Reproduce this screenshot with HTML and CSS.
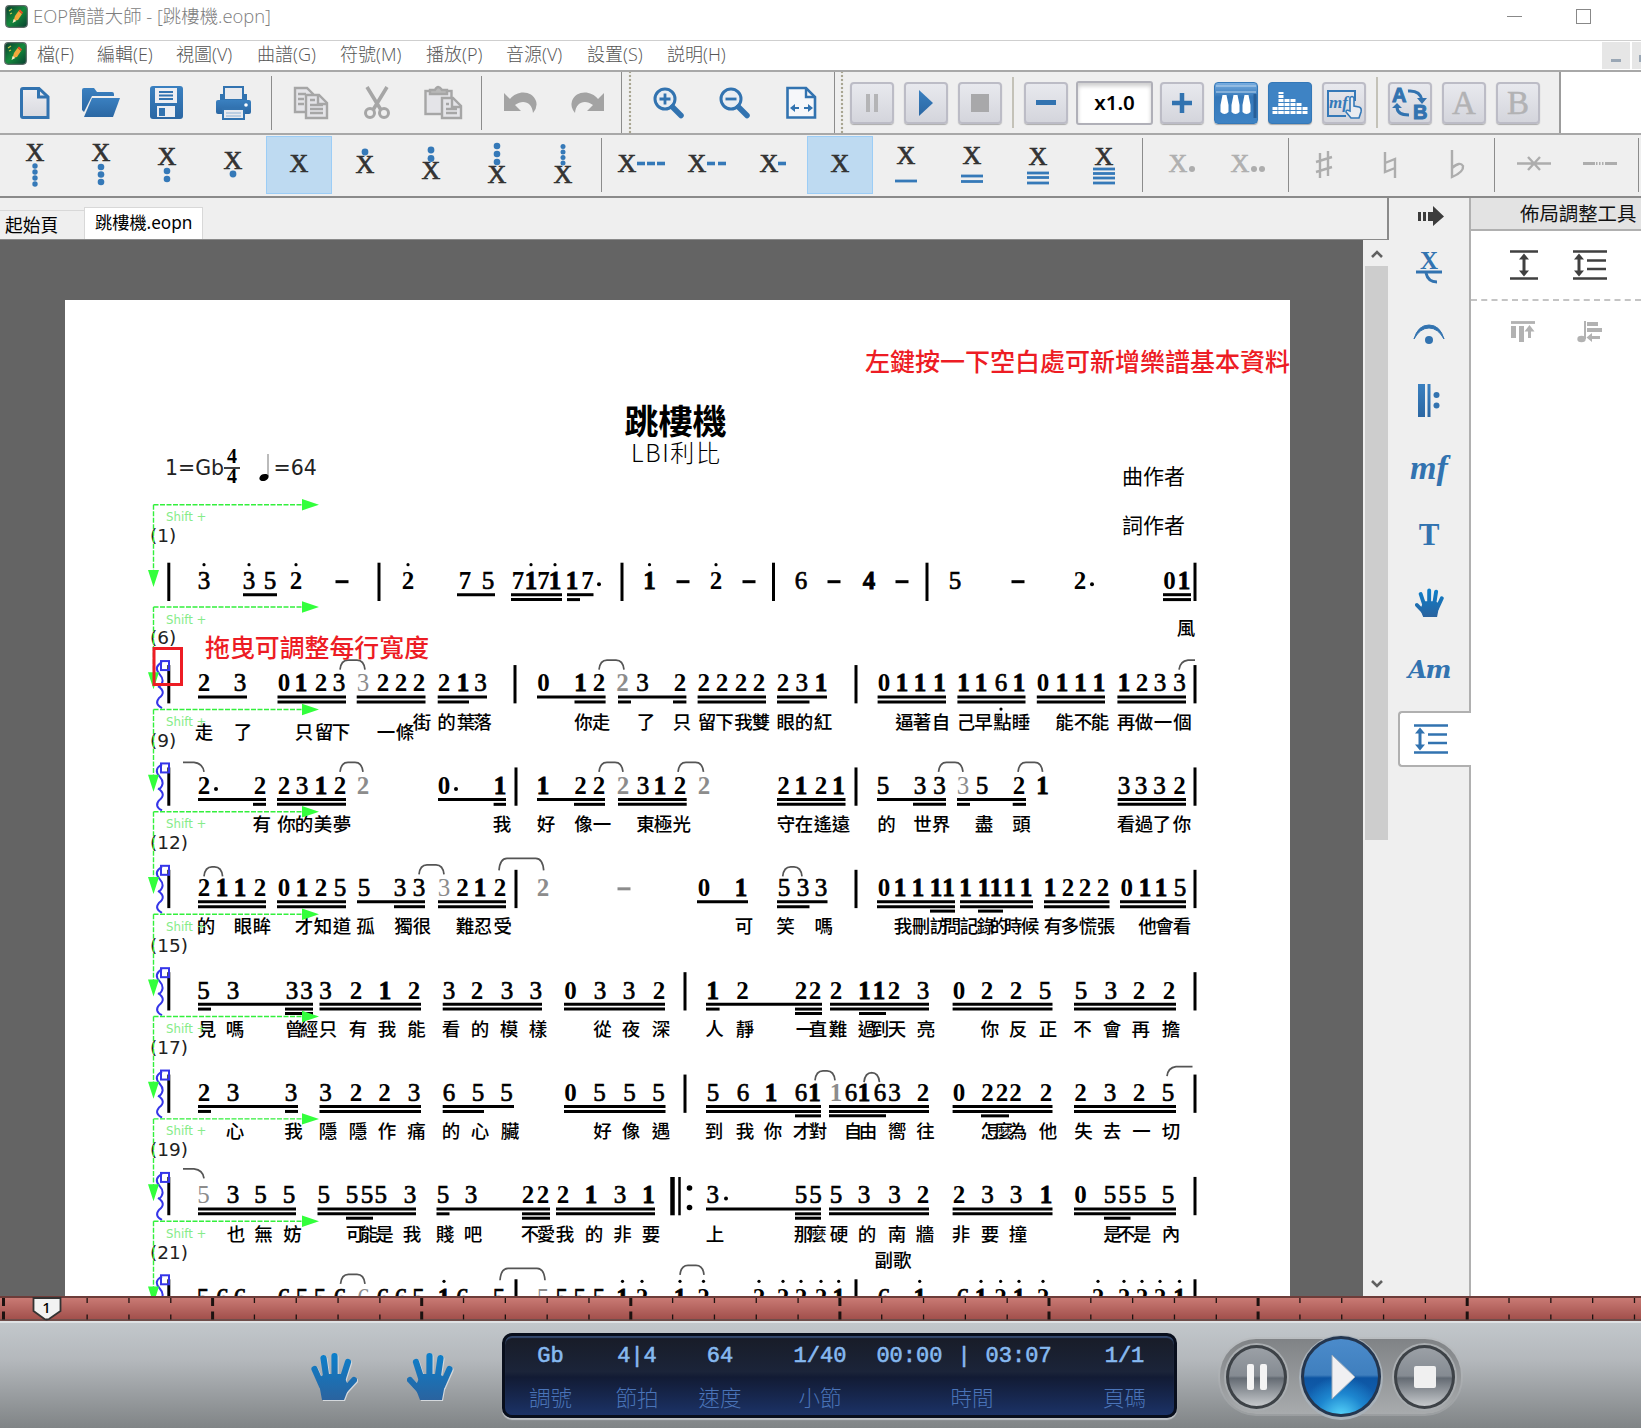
FILE: index.html
```html
<!DOCTYPE html>
<html lang="zh-Hant">
<head>
<meta charset="utf-8">
<title>EOP簡譜大師</title>
<link rel="stylesheet" href="styles.css">
</head>
<body>
<svg class="defs" width="0" height="0">
  <defs>
    <linearGradient id="blue" x1="0" y1="0" x2="0" y2="1"><stop offset="0" stop-color="#3a80c0"/><stop offset="1" stop-color="#2b67a3"/></linearGradient>
    <linearGradient id="handblue" x1="0" y1="0" x2="0" y2="48" gradientUnits="userSpaceOnUse"><stop offset="0" stop-color="#0b80cc"/><stop offset="1" stop-color="#2a639f"/></linearGradient>
    <linearGradient id="paper" x1="0" y1="0" x2="0" y2="1"><stop offset="0" stop-color="#eeeef2"/><stop offset="1" stop-color="#d8d9df"/></linearGradient>
    <linearGradient id="green" x1="0" y1="0" x2="1" y2="1"><stop offset="0" stop-color="#0a3a2c"/><stop offset=".5" stop-color="#148a3c"/><stop offset="1" stop-color="#083f30"/></linearGradient>
    <symbol id="logo" viewBox="0 0 23 23"><rect x=".7" y=".7" width="21.6" height="21.6" rx="3.5" fill="url(#green)" stroke="#5a6a66" stroke-width="1.2"/><path d="M8.500 16L10 11 13.500 6 17 9 13 15z" fill="#f3a93c"/><path d="M13.500 6l1.500-1.500 3 3-1 1.500z" fill="#f04a24"/><path d="M7.500 18l1.200-4 2.600 2z" fill="#fff0c8"/><path d="M4 6l3-2M5 9l2-1" stroke="#c8c84a" stroke-width="1.200"/></symbol>
    <symbol id="hand" viewBox="0 0 46 48" preserveAspectRatio="none"><g stroke="url(#handblue)" stroke-width="6.200" stroke-linecap="round" fill="none"><path d="M3.500 17L11 34M12.500 6L16 30M23.500 4L23.600 30M37 10L30 32M43 28L32 40"/></g><path d="M7 26L14 22H32L36.500 32 38 35 33 48H11z" fill="url(#handblue)"/></symbol>
    <symbol id="spacing" viewBox="0 0 34 30"><path d="M0 1.500H34M14 10.500H33M14 19H33M0 28.500H34" stroke="currentColor" stroke-width="2.600"/><path d="M6 7V23" stroke="currentColor" stroke-width="3"/><path d="M6 3.500l5 6H1zM6 26.500l5-6H1z" fill="currentColor"/></symbol>
  </defs>
</svg>

<header class="titlebar">
  <svg class="logo"><use href="#logo"/></svg>
  <span class="title">EOP簡譜大師 - [跳樓機.eopn]</span>
  <span class="win-min"></span><span class="win-max"></span>
</header>

<nav class="menubar">
  <svg class="logo"><use href="#logo"/></svg>
  <span class="mi w60">檔(F)</span><span class="mi w79">編輯(E)</span><span class="mi w81">視圖(V)</span><span class="mi w83">曲譜(G)</span><span class="mi w86">符號(M)</span><span class="mi w80">播放(P)</span><span class="mi w81">音源(V)</span><span class="mi w80">設置(S)</span><span class="mi">説明(H)</span>
  <span class="mdi"><i></i></span><span class="mdi last"><i></i></span>
</nav>

<div class="toolbar main">
  <div class="cell"><svg width="30" height="34"><path d="M3 2.500H19L28 11V31.500H3Q1.500 31.500 1.500 30V4Q1.500 2.500 3 2.500z" fill="url(#paper)" stroke="#3273b0" stroke-width="3"/><path d="M18.500 2V11H28" fill="none" stroke="#3273b0" stroke-width="3"/></svg></div>
  <div class="cell"><svg width="38" height="34"><path d="M0 4Q0 2 2 2H12L15 6H30Q32 6 32 8V10H10L2 26 0 24z" fill="url(#blue)"/><path d="M10 12H38L31 31H2z" fill="url(#blue)"/></svg></div>
  <div class="cell"><svg width="34" height="34"><rect x="0" y="0" width="33" height="33" rx="3" fill="url(#blue)"/><rect x="5" y="2" width="22" height="15" fill="#edeef2"/><path d="M9 6H23M9 9.500H23M9 13H23" stroke="#3273b0" stroke-width="1.800"/><rect x="7" y="20" width="18" height="11" fill="#edeef2"/><rect x="9" y="22" width="6" height="8" fill="#3273b0"/></svg></div>
  <div class="cell"><svg width="35" height="34"><rect x="4" y="8" width="27" height="10" fill="#3273b0"/><rect x="8" y="1" width="19" height="13" fill="#e9eaee" stroke="#3273b0" stroke-width="2"/><rect x="0" y="14" width="35" height="14" rx="2" fill="url(#blue)"/><rect x="7" y="23" width="21" height="10" fill="#e9eaee" stroke="#3273b0" stroke-width="2"/><path d="M10 27H25M10 30H25" stroke="#8db2d6" stroke-width="1"/><circle cx="30" cy="19" r="1.800" fill="#fff"/></svg></div>
  <div class="sep"></div>
  <div class="cell"><svg width="36" height="34" fill="#e4e4e8" stroke="#a6a6a6" stroke-width="2.400"><path d="M2 2H14L20 8V26H2z"/><path d="M5 8H13M5 13H11M5 18H11"/><path d="M13 9H26L34 17V32H13z"/><path d="M25 9V18H34M17 14H22M17 19H30M17 23H30M17 27H30" fill="none"/></svg></div>
  <div class="cell"><svg width="28" height="34" fill="none" stroke="#a6a6a6"><path d="M4 1L18 24M24 1L10 24" stroke-width="3.600"/><circle cx="7" cy="27" r="4.500" stroke-width="3"/><circle cx="21" cy="27" r="4.500" stroke-width="3"/></svg></div>
  <div class="cell"><svg width="39" height="34" fill="#e4e4e8" stroke="#a6a6a6" stroke-width="2.400"><rect x="1.500" y="5" width="26" height="23"/><path d="M6 7V4H11Q14 -2 18 4H23V8H6z" fill="#b8b8b8"/><path d="M18 12H29L37 20V32H18z"/><path d="M28 12V21H37M22 18H25M22 23H33M22 27H33" fill="none"/></svg></div>
  <div class="sep"></div>
  <div class="cell"><svg width="36" height="26"><path d="M1 3V21H18L12 15C20 9 29 12 30 23Q35 17 33 11C29 0 14 0 7 9z" fill="#a3a3a3"/></svg></div>
  <div class="cell"><svg width="36" height="26"><path d="M35 3V21H18L24 15C16 9 7 12 6 23Q1 17 3 11C7 0 22 0 29 9z" fill="#a3a3a3"/></svg></div>
  <div class="sep full"></div>
  <div class="cell"><svg width="32" height="34"><circle cx="12" cy="13" r="10" fill="#e9edf2" stroke="#3273b0" stroke-width="3"/><path d="M12 7.500V18.500M6.500 13H17.500" stroke="#3273b0" stroke-width="2.800"/><path d="M19.500 21L28 29.500" stroke="#3273b0" stroke-width="5.500" stroke-linecap="round"/></svg></div>
  <div class="cell"><svg width="32" height="34"><circle cx="12" cy="13" r="10" fill="#e9edf2" stroke="#3273b0" stroke-width="3"/><path d="M6.500 13H17.500" stroke="#3273b0" stroke-width="2.800"/><path d="M19.500 21L28 29.500" stroke="#3273b0" stroke-width="5.500" stroke-linecap="round"/></svg></div>
  <div class="cell"><svg width="31" height="34"><path d="M1.500 2H20L29 11V31.500H1.500z" fill="#f6f7fa" stroke="#3273b0" stroke-width="2.600"/><path d="M20 2V11H29" fill="none" stroke="#3273b0" stroke-width="2.400"/><path d="M8 22H13M18 22H23" stroke="#3273b0" stroke-width="2"/><path d="M4 22l5-4v8zM27 22l-5-4v8z" fill="#3273b0"/></svg></div>
  <div class="sep full second"></div>
  <div class="play-tools">
    <div class="btn"><svg width="16" height="18"><path d="M2 0h4v18h-4zM10 0h4v18h-4z" fill="#b4b4b6"/></svg></div>
    <div class="btn"><svg width="16" height="26"><path d="M1 0L15 13 1 26z" fill="url(#blue)"/></svg></div>
    <div class="btn"><svg width="18" height="18"><rect width="18" height="18" fill="#a8a8aa"/></svg></div>
    <div class="bsep"></div>
    <div class="btn"><svg width="20" height="6"><rect width="20" height="5" fill="#3273b0"/></svg></div>
    <div class="speed">x1.0</div>
    <div class="btn"><svg width="22" height="22"><path d="M11 1V21M1 11H21" stroke="#3273b0" stroke-width="4.500"/></svg></div>
    <div class="btn on piano"><svg width="44" height="41"><path d="M2 4H42M2 10H42" stroke="#bcd5ec" stroke-width="1"/><path d="M8.500 13h4l2 10v7q-4 4-8 0v-7zM19.500 13h4l2 10v7q-4 4-8 0v-7zM30.500 13h4l2 10v7q-4 4-8 0v-7z" fill="#fff"/><path d="M41 12V36" stroke="#285f98" stroke-width="3"/></svg></div>
    <div class="btn on eq"><svg width="44" height="41"><g stroke="#fff" fill="none" stroke-width="5" stroke-dasharray="3 1"><path d="M7 32V24M13 32V20M19 32V16M25 32V16M31 32V20M37 32V24" /><path d="M13 32V10"/></g></svg></div>
    <div class="btn"><svg width="40" height="36"><path d="M31 16V6H4V31H22" fill="none" stroke="#3579b8" stroke-width="2"/><text x="5" y="23" class="mfi">mf</text><path d="M26 20V13q2-3 4 0v8l5 1q3 1 2 5l-2 6h-8l-5-6q0-3 4-1v-6" fill="#e9ecf1" stroke="#3579b8" stroke-width="1.600"/></svg></div>
    <div class="bsep"></div>
    <div class="btn"><svg width="38" height="34"><text x="1" y="16" class="ab">A</text><text x="22" y="33" class="ab">B</text><path d="M17 5Q29 4 31 14M18 29Q6 29 6 21" fill="none" stroke="#3273b0" stroke-width="3"/><path d="M26 12H36L31 18zM1 22H11L6 17z" fill="#3273b0"/></svg></div>
    <div class="btn"><span class="letter">A</span></div>
    <div class="btn"><span class="letter">B</span></div>
  </div>
</div>

<div class="toolbar notes" id="notes"></div>

<div class="workspace">
  <div class="editor">
    <div class="tabs"><span class="tab">起始頁</span><span class="tab active">跳樓機.eopn</span></div>
    <div class="view">
      <div class="canvas">
        <div class="page"><svg id="score" width="1225" height="997" viewBox="65 300 1225 997"></svg></div>
      </div>
      <div class="scroll">
        <svg width="14" height="10"><path d="M2 8L7 3 12 8" fill="none" stroke="#606060" stroke-width="2.600"/></svg>
        <div class="thumb"></div>
        <svg width="14" height="10"><path d="M2 2L7 7 12 2" fill="none" stroke="#606060" stroke-width="2.600"/></svg>
      </div>
    </div>
  </div>
  <aside class="side">
    <div class="s first"><svg width="26" height="20"><path d="M0 6h3v9h-3zM5 6h3v9h-3zM10 6h5V0L26 10.500 15 20V15h-5z" fill="#3c3c3c"/></svg></div>
    <div class="s"><svg width="26" height="32"><text x="13" y="17.500" text-anchor="middle" class="xs">X</text><path d="M0 21H26" stroke="#3273b0" stroke-width="3"/><path d="M10 22Q12 31 21 31" fill="none" stroke="#3273b0" stroke-width="3"/></svg></div>
    <div class="s"><svg width="32" height="20"><path d="M1 15Q5 1 16 1T31 15Q25 4 16 4T1 15z" fill="#3273b0" stroke="#3273b0"/><circle cx="16" cy="16" r="4" fill="#3273b0"/></svg></div>
    <div class="s"><svg width="22" height="33"><path d="M0 0h7v33h-7zM9.500 0h3v33h-3z" fill="url(#blue)"/><circle cx="18.500" cy="11" r="3" fill="#3273b0"/><circle cx="18.500" cy="21.500" r="3" fill="#3273b0"/></svg></div>
    <div class="s mf">mf</div>
    <div class="s t">T</div>
    <div class="s"><svg class="flip" width="29" height="29"><use href="#hand"/></svg></div>
    <div class="s am">Am</div>
    <div class="s sel"><svg width="34" height="30"><use href="#spacing"/></svg></div>
  </aside>
  <section class="panel">
    <h2>佈局調整工具</h2>
    <div class="tools top"><svg width="28" height="30"><path d="M0 1.500H28M0 28.500H28" stroke="#404040" stroke-width="2.600"/><path d="M14 7V23" stroke="#404040" stroke-width="3"/><path d="M14 3.500l5 6H9zM14 26.500l5-6H9z" fill="#404040"/></svg><svg width="34" height="30"><use href="#spacing"/></svg></div>
    <div class="tools"><svg width="24" height="22"><path d="M0 1.500H24" stroke="#b2b2b2" stroke-width="2.800"/><path d="M0 5h5v12h-5zM8 5h5v16h-5zM17 9h3v8h-3zM13.500 10.500L18.500 4 23.500 10.500z" fill="#b2b2b2"/></svg><svg width="26" height="22" fill="#b2b2b2"><path d="M7 0h2v18h-2zM10 1h11v4H10zM10 7h15v4H10zM14 15h9v3h-9zM9.500 16.500L15 12v9z"/><ellipse cx="4.500" cy="18" rx="4.200" ry="3.200"/></svg></div>
  </section>
</div>

<div class="ruler"><svg id="ruler" width="1641" height="24"></svg></div>

<footer class="transport">
  <svg class="h1" width="46" height="48"><use href="#hand"/></svg>
  <svg class="h2 flip" width="46" height="48"><use href="#hand"/></svg>
  <div class="display">
    <div class="d c1"><b>Gb</b><span>調號</span></div>
    <div class="d c2"><b>4|4</b><span>節拍</span></div>
    <div class="d c3"><b>64</b><span>速度</span></div>
    <div class="d c4"><b>1/40</b><span>小節</span></div>
    <div class="d c5"><b><em>00:00</em><em>|</em><em>03:07</em></b><span>時間</span></div>
    <div class="d c6"><b>1/1</b><span>頁碼</span></div>
  </div>
  <div class="deck">
    <div class="round"><svg width="24" height="26"><path d="M2 2Q2 0 4 0H7Q9 0 9 2V24Q9 26 7 26H4Q2 26 2 24zM15 2Q15 0 17 0H20Q22 0 22 2V24Q22 26 20 26H17Q15 26 15 24z" fill="#f4f4f4"/></svg></div>
    <div class="round big"><svg width="26" height="46"><path d="M1 1L24 23 1 45z" fill="#f0f0f2" stroke="#9ab" stroke-width="1"/></svg></div>
    <div class="round"><svg width="22" height="22"><rect width="22" height="22" rx="2" fill="#f0f0f0"/></svg></div>
  </div>
</footer>
<script src="score.js"></script>
</body>
</html>
```
FILE: styles.css
```css
* { box-sizing: border-box; }
body { margin: 0; width: 1641px; height: 1428px; overflow: hidden; background: #fff; font-family: "Noto Sans", "Noto Sans CJK TC", sans-serif; display: flex; flex-direction: column; }
.defs { position: absolute; }
svg { display: block; flex: none; overflow: visible; }
.logo { width: 23px; height: 23px; }

.titlebar { height: 41px; flex: none; display: flex; align-items: flex-start; padding: 5px 0 0 5px; border-bottom: 1px solid #cfcfcf; }
.title { font: 300 18.400px/22px "Open Sans", "Noto Sans CJK TC", sans-serif; color: #7d7d7d; margin-left: 5px; width: 1474px; white-space: nowrap; }
.win-min { width: 15px; height: 1px; background: #888; margin-top: 11px; }
.win-max { width: 15px; height: 15px; border: 1px solid #888; margin: 4px 0 0 54px; }

.menubar { height: 31px; flex: none; display: flex; padding: 1px 0 0 4px; border-bottom: 2px solid #a8a8a8; }
.mi { font: 300 18px/24px "Open Sans", "Noto Sans CJK TC", sans-serif; color: #555; white-space: nowrap; flex: none; }
.menubar .logo { margin-right: 10px; }
.w60 { width: 60px; } .w79 { width: 79px; } .w81 { width: 81px; } .w83 { width: 83px; } .w86 { width: 86px; } .w80 { width: 80px; }
.mdi { width: 28px; height: 27px; background: #e6e6e6; margin-left: auto; padding: 17px 0 0 9px; flex: none; }
.mdi i { display: block; width: 10px; height: 3px; background: #9aa7b5; }
.mdi.last { width: 9px; margin-left: 2px; padding: 13px 0 0 7px; overflow: hidden; }
.mdi.last i { height: 7px; }

.toolbar { flex: none; display: flex; align-items: center; }
.main { height: 63px; padding-left: 2px; border-bottom: 2px solid #a8a8a8; background: linear-gradient(90deg, #efefef 1560px, #fff 1560px); }
.cell { width: 66px; height: 58px; flex: none; display: flex; align-items: center; justify-content: center; }
.sep { width: 12px; height: 54px; flex: none; background: linear-gradient(#8c8c8c, #8c8c8c) 5px 0 / 1px 100% no-repeat; }
.sep.full { width: 16px; height: 61px; background: radial-gradient(circle, #a9a692 1.3px, transparent 1.6px) 8px 2px / 4px 4px repeat-y, linear-gradient(#8c8c8c, #8c8c8c) 1px 0 / 1px 100% no-repeat; }
.sep.second { background-position: 6px 2px, 0 0; }
.play-tools { display: flex; align-items: center; gap: 10px; width: 711px; height: 61px; border-right: 2px solid #9c9c9c; }
.btn { width: 44px; height: 42px; flex: none; border: 2px solid #bcbcc6; border-radius: 4px; background: linear-gradient(#e8e9ee, #d4d5dc); box-shadow: 0 1px 1px #aaa; display: flex; align-items: center; justify-content: center; }
.btn.on { border: 1px solid #3478b8; background: #3e83c4; }
.piano.on { background: linear-gradient(#78ade0, #3477b8 35%, #3e83c4); }
.bsep { width: 2px; height: 51px; background: #c4c2b8; flex: none; }
.speed { width: 77px; height: 44px; margin: 0 -3px 0 -2px; border: 2px solid #b0b0b8; border-radius: 3px; background: #fff; box-shadow: inset 0 3px 4px #ccc; font: 600 20.500px/39px "Noto Sans", sans-serif; text-align: center; }
.mfi { font: italic bold 17px "Liberation Serif", serif; fill: #3579b8; }
.ab { font: bold 20px "Liberation Sans", sans-serif; fill: #3273b0; stroke: #3273b0; }
.letter { font: 33px/36px "Liberation Serif", serif; color: #b2b2b4; -webkit-text-stroke: .5px #b2b2b4; }

.notes { height: 63px; padding: 0 0 1px 2px; background: #efefef; border-bottom: 2px solid #8a8a8a; }
.notes .cell { height: 57px; }
.notes .cell.sel { height: 58px; background: #bedaf1; border: 1px solid #9ccdf6; }
.notes .x { font: 26px "Liberation Serif", serif; fill: #333; stroke: #333; stroke-width: .7; }
.notes .gray .x { fill: #b0b0b0; stroke: #b0b0b0; }

.workspace { height: 1098px; flex: none; display: flex; background: #efefef; }
.editor { width: 1389px; flex: none; display: flex; flex-direction: column; }
.tabs { height: 42px; flex: none; display: flex; align-items: flex-end; background: #efefef; border-right: 2px solid #8a8a8a; border-bottom: 1px solid #8a8a8a; }
.tab { width: 84px; height: 29px; padding-left: 5px; font: 17.700px/28px "Noto Sans", "Noto Sans CJK TC", sans-serif; color: #000; border-top: 1px solid #d8d8d8; white-space: nowrap; }
.tab.active { width: 119px; height: 32px; padding-left: 10px; font-size: 17.200px; line-height: 29px; background: #fff; border: 1px solid #d8d8d8; border-bottom: 0; }
.view { flex: 1; display: flex; overflow: hidden; }
.canvas { width: 1363px; background: #646464; padding: 60px 0 0 65px; }
.page { width: 1225px; height: 996px; background: #fff; overflow: hidden; }
.scroll { width: 26px; background: #efefef; display: flex; flex-direction: column; align-items: center; padding: 0 1px 7px 2px; }
.scroll svg:first-child { margin-top: 9px; }
.thumb { width: 23px; height: 574px; background: #cdcdcd; margin: 7px 0 auto; }

.side { width: 82px; flex: none; display: flex; flex-direction: column; align-items: center; background: #efefef; border-right: 2px solid #b0b0b0; }
.s { height: 67.200px; width: 80px; flex: none; display: flex; align-items: center; justify-content: center; color: #3273b0; }
.s.first { height: 35px; padding-left: 4px; }
.s.mf { font: italic bold 34px/30px "Liberation Serif", serif; }
.s.t { font: bold 31px/30px "Liberation Serif", serif; }
.s.am { font: italic bold 24.500px/30px "DejaVu Serif", "Liberation Serif", serif; letter-spacing: -1.500px; }
.s.sel { height: 56px; width: 75px; margin: 8px -2px 0 9px; background: #fff; border: 2px solid #b0b0b0; border-right: 0; border-radius: 4px 0 0 4px; padding-right: 12px; align-self: flex-start; }
.xs { font: bold 25px "Liberation Serif", serif; fill: #3273b0; }
.flip { transform: scaleX(-1); }

.panel { flex: 1; background: #fff; overflow: hidden; color: #404040; }
.panel h2 { margin: 0; height: 33px; background: #e3e3e3; border-bottom: 2px solid #b0b0b0; padding-left: 49px; font: 19.400px/29px "Noto Sans CJK TC", sans-serif; color: #111; white-space: nowrap; }
.tools { display: flex; align-items: center; gap: 42px; padding-left: 40px; height: 62px; }
.tools.top { gap: 35px; height: 70px; padding-left: 39px; border-bottom: 2px dashed #c4c4c4; }

.ruler { height: 25px; flex: none; background: linear-gradient(#c97a74, #a2504c); border-top: 2px solid #6d3c39; border-bottom: 2px solid #6f4d4a; }
.ruler svg { margin-top: -1px; }
.pin { font: 500 15px "Noto Sans", sans-serif; text-anchor: middle; }

.transport { height: 107px; flex: none; display: flex; background: linear-gradient(#c2c7cb, #b4b8bc 35%, #808486); border-top: 2px solid #dfe2e4; }
.h1 { margin: 29px 0 0 311px; filter: drop-shadow(1px 1px 0 #d4d8dc); }
.h2 { margin: 29px 0 0 50px; filter: drop-shadow(-1px 1px 0 #d4d8dc); }
.display { width: 675px; height: 85px; flex: none; margin: 10px 0 0 49px; border: 3px solid #080e1c; border-radius: 10px; background: linear-gradient(#181c27, #1b2439 45%, #121b34 52%, #1b3266); box-shadow: 0 2px 1px #bfc3c7, inset 0 2px 1px #34496e; display: flex; }
.d { display: flex; flex-direction: column; align-items: center; flex: none; }
.d b { font: 22px/26px "Liberation Mono", monospace; color: #86b9f0; margin-top: 8px; -webkit-text-stroke: .6px #86b9f0; white-space: nowrap; }
.d span { font: 300 21.500px/26px "Noto Sans CJK TC", sans-serif; color: #4a74b8; margin-top: 14px; }
.d em { font-style: normal; margin: 0 7.500px; }
.c1 { width: 91px; } .c2 { width: 82px; } .c3 { width: 84px; } .c4 { width: 116px; } .c5 { width: 192px; margin: 0 13px 0 -10px; } .c6 { width: 103px; }
.c5 span { padding-left: 16px; }
.deck { width: 241px; height: 75px; margin: 16px 0 0 43px; flex: none; border-radius: 36px; background: linear-gradient(#808386, #a8abad); box-shadow: 0 0 0 2px #b4b7ba66; display: flex; align-items: center; justify-content: space-between; padding: 0 6px; }
.round { width: 61px; height: 64px; border-radius: 50%; border: 3px solid #3d4247; background: linear-gradient(#9ba0a6 0, #858b92 48%, #646b73 52%, #c6c9cc 100%); box-shadow: 0 0 0 2px #a9adb0; display: flex; align-items: center; justify-content: center; }
.round.big { width: 80px; height: 81px; border-color: #24364f; background: radial-gradient(circle at 50% 105%, #5cdcff 0, #1d86cf 28%, transparent 48%), linear-gradient(#4b8bcb 0, #3f7fbe 48%, #0d55a3 52%, #1668b8); box-shadow: 0 1px 0 2px #a9b2ba; padding-left: 6px; }

.n { font: bold 25px "Liberation Serif", serif; text-anchor: middle; }
.n.thin { font-weight: 400; stroke: #000; stroke-width: .7; }
.n.heavy { stroke: #000; stroke-width: .8; }
.n.tied { fill: #8c8c8c; stroke-width: 0; }
.ly { font: 500 18.500px "Noto Sans CJK TC", sans-serif; text-anchor: middle; }
.u { stroke: #000; stroke-width: 3; }
.slur { fill: none; stroke: #555; stroke-width: 1.700; }
.g { stroke: #33f03c; stroke-width: 1.400; stroke-dasharray: 5 1.500; }
.ga { fill: #33ff3c; }
.shift { font: 11.800px "DejaVu Sans", sans-serif; fill: #86ec88; }
.num { font: 18.500px "DejaVu Sans", sans-serif; fill: #222; }
.key { font: 20.500px "DejaVu Sans", sans-serif; fill: #222; }
.heading { font: bold 34.200px "Noto Sans CJK TC", sans-serif; text-anchor: middle; }
.artist { font: 300 24px "Noto Sans CJK TC", sans-serif; }
.by { font: 21px "Noto Sans CJK TC", sans-serif; }
.tip { font: 500 25px "Noto Sans CJK TC", sans-serif; fill: #ed1c24; }
.blue { fill: none; stroke: #3535e8; stroke-width: 2; }
```
FILE: score.js
```js
// Note palette ---------------------------------------------------------
const bx = (y) => `<text class="x" x="33" y="${y}" text-anchor="middle">X</text>`;
const dots = (ys, r) => ys.map(y => `<circle cx="33" cy="${y}" r="${r}" fill="#3579b8"/>`).join('');
const lines = (ys) => ys.map(y => `<path d="M22 ${y}H44" stroke="#3579b8" stroke-width="2.8"/>`).join('');
const dashes = (xs) => xs.map(x => `<path d="M${x} 28.5h8" stroke="#3579b8" stroke-width="3.6"/>`).join('');
const xAt = (x, y) => `<text class="x" x="${x}" y="${y}" text-anchor="middle">X</text>`;
const G = '#adadad';
const palette = [
  [bx(26) + dots([31, 37, 43, 49], 2.7)], [bx(26) + dots([32, 39.5, 47], 3.3)],
  [bx(30) + dots([36, 44], 3.3)], [bx(34) + dots([39], 3.4)],
  [bx(37), 'sel'],
  [bx(38) + dots([17], 3.4)], [bx(44) + dots([15, 23.5], 3.4)],
  [bx(48) + dots([11, 19, 27], 3.3)], [bx(48) + dots([11.5, 17, 22.5, 28], 2.5)],
  'sep13',
  [xAt(18, 37) + dashes([28, 38, 48])], [xAt(22, 37) + dashes([32, 43])], [xAt(28, 37) + dashes([37])],
  [bx(37), 'sel'],
  [bx(29) + lines([46])], [bx(29) + lines([41, 46.5])], [bx(30) + lines([38, 42.5, 48])],
  [bx(30) + lines([34, 38.5, 43, 48])],
  'sep14',
  [xAt(27, 37) + `<circle cx="41" cy="34" r="3" fill="${G}"/>`, 'gray'],
  [xAt(23, 37) + `<circle cx="37" cy="34" r="3" fill="${G}"/><circle cx="45" cy="34" r="3" fill="${G}"/>`, 'gray'],
  'sep8',
  [`<path d="M29 18V43M37 16V41M25 27L41 22M25 37L41 32" stroke="${G}" stroke-width="2.4"/>`],
  [`<path d="M28 17V37L38 33M38 43V24L28 28" fill="none" stroke="${G}" stroke-width="2.4"/>`],
  [`<path d="M29 15V42Q41 37 40 31Q37 26 29 33" fill="none" stroke="${G}" stroke-width="2.4"/>`],
  'sep12',
  [`<path d="M16 28.500H50M27 22L39 35M39 22L27 35" stroke="${G}" stroke-width="2.4"/>`],
  [`<path d="M16 28.500H28M38 28.500H50" stroke="${G}" stroke-width="3"/><path d="M29 28.500H38" stroke="${G}" stroke-width="3" stroke-dasharray="1.500 1.500"/>`],
  'sep11'
];
document.getElementById('notes').innerHTML = palette.map(p => {
  if (typeof p === 'string') return `<div class="sep" style="width:${p.slice(3)}px"></div>`;
  return `<div class="cell ${p[1] || ''}"><svg width="66" height="60">${p[0]}</svg></div>`;
}).join('');

// Score ----------------------------------------------------------------
// n: notes as x:digit (' = dot above, , = dot below, ~ = tied, . and - as drawn)
// b: barlines; u/s/t: first, second, third underline; d: first and second together
// sl: slurs x1-x2@top (L/R = half slur); ly: lyrics
const rows = [
  { no: 1, n: "204:3' 249:3' 270:5 296:2' 342:- 408:2' 465:7 488:5 518:7 531:1' 543.5:7 555:1' 572:1 587.5:7 599:. 649.5:1' 683:- 716:2' 749:- 801:6 834:- 869:4 902:- 955:5 1018:- 1080:2 1092:. 1169.5:0 1184:1",
    b: "379 622 773.5 927 1195", u: "243-277 457-495 567-593.5", d: "511-562 1163-1191", s: "567-580", t: "", sl: "", ly: "1186:風:9" },
  { no: 6, n: "204:2 240:3 284:0 301:1 321:2 339:3 363:3~ 383:2 401:2 419:2 444:2 463:1 480.5:3 543.5:0 580.5:1 599:2 622.6:2~ 642.5:3 680:2 703.7:2 722:2 741:2 759:2 783:2 801.7:3 821:1 884:0 902:1 920:1 939.6:1 963.5:1 981:1 1001:6, 1019:1 1043:0 1062:1 1080.5:1 1099:1 1124:1 1142:2 1160:3 1179.5:3",
    b: "515 856 1195", u: "198-247 437.7-487 537-605.6 618-686.4 777-827", d: "277.5-346 356.7-425.5 697.6-766 877.6-946 957.4-1025.5 1036.8-1105 1117.4-1186", s: "437.7-469 574.5-605.6 618-631 673-686.4 777-809.5", t: "",
    sl: "340-365@53 599-624@53 1179-1195@53R",
    ly: "204:走:10 243:了:10 304:只:10 324:留:10 341:下:10 386:一:10 405:條:10 422:街 446.6:的 466:葉 482.5:落 583.5:你 601:走 646:了 682:只 707:留 724.5:下 743.6:我 761:雙 785.7:眼 804:的 823:紅 904.5:逼 922:著 941:自 966:己 983.5:早 1002.5:點 1021:睡 1064.5:能 1083:不 1100:能 1126:再 1144:做 1163:一 1182.5:個" },
  { no: 9, n: "204:2 216:. 260:2 284:2 302:3 321:1 340:2 363:2~ 444:0 456:. 500:1 543:1 580.5:2 599:2 623:2~ 643:3 660:1 680:2 704:2~ 783.5:2 801:1 821:2 838.6:1 883:5 920:3 939.6:3 963:3~ 982:5 1019:2 1042.6:1 1124:3 1141:3 1159.6:3 1179.6:2",
    b: "516 856 1195", u: "198-266 438-506 537-605 877-946 957-1026", d: "277-346 618-686.7 777-845.5 1117.6-1186", s: "253-266 493.6-506 574-605 913-946 957-970 1012.7-1026", t: "",
    sl: "183-204@53L 340-363@53 599-623@53 678-703.5@53 938.5-963@53 1018-1042.6@53",
    ly: "261.7:有 286.5:你 304:的 323:美 342:夢 502:我 546:好 583.5:像 602:一 645.5:東 663:極 681.7:光 786:守 804:在 823:遙 841:遠 886.5:的 922.4:世 941:界 984:盡 1021.5:頭 1126:看 1144:過 1162:了 1182:你" },
  { no: 12, n: "204:2 222:1 240:1 260:2 284:0 302:1 321:2 340:5 364:5 400:3 419:3 444:3~ 462.6:2 480:1 500:2 543:2~ 624:-~ 704:0 741:1 784:5 803:3 821:3 884:0 900:1 918:1 936:1 948.4:1 965.6:1 984:1 996:1 1009.6:1 1026:1 1050:1 1068:2 1085:2 1103:2 1126.7:0 1145:1 1161:1 1180:5",
    b: "516 856 1195", u: "357-425 697-748 777-827.5", d: "198-266 277-346 438-506 877-955 960-1033 1044-1109.5 1120-1186", s: "394-425 777-809.5", t: "930-955 978-1003",
    sl: "204-222.6@55 419-444@53 499-543.7@46.6 782.7-802@55",
    ly: "206:的 243:眼 262:眸 304:才 323:知 342:道 365.5:孤 403.6:獨 422:很 465:難 483:忍 502.7:受 744:可 785.5:笑 823.7:嗎 903:我 921:刪 939:訪 952:問 969:記 986:錄 999:的 1013:時 1030:候 1053:有 1070:多 1088:慌 1106:張 1147.5:他 1164.6:會 1182:看" },
  { no: 15, n: "203.5:5 233:3 292:3 306.5:3 325.6:3 356:2 385:1 414:2 449:3 477:2 507:3 535.7:3 570.5:0 600:3 629:3 659:2 712.7:1 742.6:2 801:2 815:2 836:2 864.6:1 879:1 894:2 923:3 959:0 987:2 1016:2 1045:5 1081:5 1110.7:3 1139:2 1169:2",
    b: "685 1195", u: "198-313 706-822", d: "319.5-421 442.7-542 564-665 830-929 952.6-1052.5 1074-1176", s: "198-211 285-313 706-719.6 795-822", t: "285-313 795-822 859-886", sl: "",
    ly: "207:見 235:嗎 294:曾 309:經 328:只 358:有 387:我 416.6:能 451:看 480:的 509:模 538:樣 602.6:從 631:夜 661:深 714.6:人 745:靜 805:一 818:直 838:難 867:過 880:到 897:天 926:亮 990:你 1018:反 1048:正 1082.5:不 1112:會 1140.7:再 1171:擔" },
  { no: 17, n: "204:2 233:3 291:3 325.6:3 356:2 384.5:2 414:3 449:6 478:5 506.6:5 570.5:0 599.5:5 629.4:5 658.4:5 713:5 743:6 771:1 801:6 814.5:1 836:1~ 851:6 864:1 880:6 894.5:3 923:2 959:0 987.5:2 1002:2 1015.6:2 1046:2 1080.6:2 1110:3 1139:2 1168:5",
    b: "685 1195", u: "198-298 442.7-514", d: "319.5-421 564-665.5 706-821 829-929 952.6-1052.5 1074-1176", s: "198-211 285-298 442.7-484", t: "795-821 829-886 981-1009",
    sl: "815-835@54.3 864-879.5@56 1167-1192.5@50R",
    ly: "235:心 293.5:我 328:隱 358:隱 387:作 416.6:痛 451:的 480:心 510:臟 602.6:好 631:像 661:遇 714:到 745:我 773:你 802:才 818:對 853:自 868:由 897:嚮 925.5:往 990:怎 1003.5:麼 1018:為 1048:他 1083.5:失 1112:去 1141.6:一 1171:切" },
  { no: 19, n: "203.5:5~ 233:3 260.5:5 289:5 323.7:5 352:5 367:5 380.7:5 410:3 443:5 471:3 528:2 543:2 563:2 591:1 620:3 648.5:1 712.7:3 726:. 801:5 815.5:5 836:5 864:3 894.5:3 923:2 959:2 987.5:3 1016:3 1046:1 1080.6:0 1110:5 1124.7:5 1140:5 1168:5",
    b: "1195", u: "436.5-550 706-821", d: "198-296 317.5-416 556-655 829-929 952.6-1052.5 1074-1176", s: "436.5-449.5 522-550 795-821", t: "346-373 522-550 795-821 1104-1130.5",
    sl: "183-204@50L",
    ly: "236:也 263.6:無 292.6:妨 355:可 369:能 384.5:是 412:我 445:賤 473:吧 530:不 546:愛 565:我 594:的 622.5:非 651:要 715:上 803:那 817.5:麼 839:硬 867:的 897:南 925:牆 961:非 990:要 1018:撞 1112.6:是 1126:不 1142:是 1171:內" },
  { no: 21, n: "203:5 222.6:6 240:6 284:6 302:5 320:5 340:6 363.5:6~ 383:6 401:6 418.6:5 444:1' 462.6:6 499:5 543:5~ 561.7:5 579.7:5 599:5 622.5:1' 642:2' 680:1' 703.5:2' 759:2' 783:2' 801:2' 821:2' 838.7:1' 884:6 919.7:1' 963:6 981:1' 1000.6:2' 1019:1' 1043:2' 1098:2' 1124:2' 1142:2' 1160:2' 1179.5:1'",
    b: "516 856 1195", u: "", d: "", s: "", t: "", sl: "340.5-365@53 500-545@47 680-704@44", ly: "" }
];
const list = (s) => s ? s.split(' ') : [];
const line = (x1, x2, y) => `<path class="u" d="M${x1} ${y}H${x2}"/>`;
let out = '';

rows.forEach((r, i) => {
  const g = 504.7 + i * 102.37;
  for (const k of list(r.n)) {
    const [x, v] = k.split(':');
    const tied = v.includes('~'), c = v[0];
    const weight = '356'.includes(c) ? 'thin' : '14'.includes(c) ? 'heavy' : '';
    if (c === '-') out += `<path d="M${x - 6.5} ${g + 77}h13" stroke="${tied ? '#8c8c8c' : '#000'}" stroke-width="3"/>`;
    else if (c === '.') out += `<circle cx="${x}" cy="${g + 79.5}" r="2"/>`;
    else out += `<text class="n ${weight} ${tied ? 'tied' : ''}" x="${x}" y="${g + 84.4}">${c}</text>`;
    if (v.includes("'")) out += `<circle cx="${x}" cy="${g + 60}" r="1.6"/>`;
    if (v.includes(',')) out += `<circle cx="${x}" cy="${g + 102}" r="1.6"/>`;
  }
  for (const x of ['168.8', ...list(r.b)]) out += `<path d="M${x} ${g + 58}V${g + 96.3}" stroke="#000" stroke-width="3"/>`;
  for (const [key, ys] of [['u', [90]], ['d', [90, 94.9]], ['s', [94.9]], ['t', [99.3]]])
    for (const k of list(r[key])) { const [a, b] = k.split('-'); ys.forEach(y => out += line(a, b, g + y)); }
  for (const k of list(r.sl)) {
    const [, a, b, t, h] = k.match(/([\d.]+)-([\d.]+)@([\d.]+)(\w?)/).map((v, j) => j && j < 4 ? +v : v);
    const y = g + t, e = y + (b - a > 35 ? 12 : 9.5);
    if (h === 'L') out += `<path class="slur" d="M${a} ${y}H${b - 10}Q${b - 1} ${y + 1} ${b} ${e}"/>`;
    else if (h === 'R') out += `<path class="slur" d="M${a} ${e}Q${a + 1} ${y + 1} ${a + 9} ${y}H${b}"/>`;
    else out += `<path class="slur" d="M${a} ${e}Q${a + 1} ${y} ${a + 8} ${y}H${b - 8}Q${b - 1} ${y} ${b} ${e}"/>`;
  }
  for (const k of list(r.ly)) {
    const [x, c, dy] = k.split(':');
    out += `<text class="ly" x="${x}" y="${g + 121.6 + (+dy || 0)}">${c}</text>`;
  }
  out += `<text class="num" x="150" y="${g + 37.4}">(${r.no})</text>`;
  if (i) out += `<path class="blue" d="M162 ${g + 55}Q153 ${g + 60} 159.500 ${g + 67}Q166 ${g + 74} 159 ${g + 80}M158 ${g + 79}Q167 ${g + 85} 159 ${g + 91}Q154 ${g + 97} 162 ${g + 101}"/><rect class="blue" x="161" y="${g + 54}" width="8" height="9" stroke-width="1.5"/>`;
  out += `<path class="g" d="M153.500 ${g}V${g + 66}M153.500 ${g}H302"/><path class="ga" d="M148 ${g + 65.3}h11l-5.500 17zM302 ${g - 5.7}l17 5.7l-17 5.7z"/><text class="shift" x="166" y="${g + 16.5}">Shift +</text>`;
});

// Repeat sign of line 19
out += '<path d="M672.500 1177V1215.300" stroke="#000" stroke-width="4.500"/><path d="M679.500 1177V1215.300" stroke="#000" stroke-width="2.500"/><circle cx="689.500" cy="1188" r="2.800"/><circle cx="689.500" cy="1207.500" r="2.800"/>';
out += '<text class="ly" x="893" y="1266.500">副歌</text>';
out += '<text class="heading" x="675.500" y="434">跳樓機</text><text class="artist" x="631" y="462" textLength="89">LBI利比</text><text class="by" x="1122" y="484">曲作者</text><text class="by" x="1122" y="533">詞作者</text>';
out += '<text class="key" x="165" y="475">1=Gb</text><text class="key" x="273.500" y="475">=64</text><text class="n" x="232" y="463" style="font-size:20px">4</text><text class="n" x="232" y="483" style="font-size:20px">4</text><path d="M224 468h16" stroke="#000" stroke-width="1.500"/><path d="M268 454V476" stroke="#bbb" stroke-width="2"/><ellipse cx="264" cy="477.500" rx="4.800" ry="3.400" transform="rotate(-20 264 477.500)"/>';
out += '<text class="tip" x="865" y="371">左鍵按一下空白處可新增樂譜基本資料</text><text class="tip" x="205" y="657" style="font-size:24.900px">拖曳可調整每行寬度</text><rect x="154" y="648.500" width="27.500" height="36" fill="none" stroke="#ed1c24" stroke-width="3"/>';
document.getElementById('score').innerHTML = out;

// Ruler ----------------------------------------------------------------
let ticks = '';
for (let i = 0; i < 40; i++) {
  const x = 3.5 + i * 41.82, major = i % 5 === 0, w = major ? 3 : 1.3, l = major ? 8 : 5;
  ticks += `<path d="M${x} 1v${l}M${x} ${22.5 - l}v${l}" stroke="#1c1210" stroke-width="${w}"/>`;
}
ticks += '<path d="M33.500 1H60.500V14L49 22Q46.500 23 44.500 22L33.500 14z" fill="#f2f2f2" stroke="#333" stroke-width="1.800"/><text class="pin" x="46.500" y="16">1</text>';
document.getElementById('ruler').innerHTML = ticks;
```
